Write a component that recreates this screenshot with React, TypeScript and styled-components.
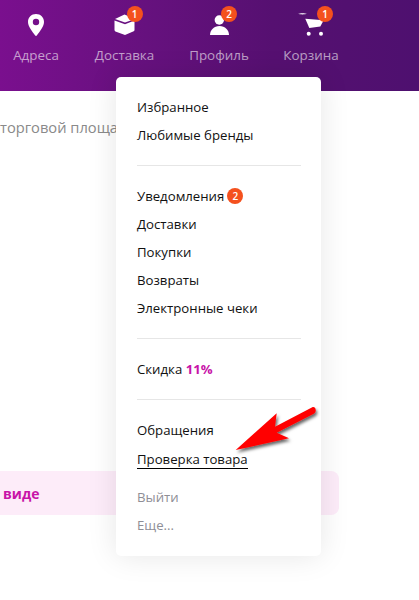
import React from "react";
import styled, { createGlobalStyle } from "styled-components";

const Global = createGlobalStyle`
  html, body { margin: 0; padding: 0; background: #fff; }
  body { font-family: "Open Sans", "Noto Sans", sans-serif; overflow: hidden; }
`;

const Page = styled.div`
  position: relative;
  width: 419px;
  height: 600px;
  overflow: hidden;
  background: #fff;
`;

const Header = styled.header`
  height: 91px;
  background: linear-gradient(90deg, #7a0f8e 0%, #66117e 35%, #561071 65%, #4e106f 100%);
  display: flex;
`;

const NavItem = styled.div<{ $w: number }>`
  width: ${(p) => p.$w}px;
  display: flex;
  flex-direction: column;
  align-items: center;
  padding-top: 11px;
  color: rgba(255, 255, 255, 0.6);
  font-size: 13.4px;
  line-height: 20px;
`;

const IconWrap = styled.div`
  position: relative;
  width: 30px;
  height: 26px;
  margin-bottom: 8px;
`;

const Badge = styled.span`
  display: inline-flex;
  align-items: center;
  justify-content: center;
  width: 16px;
  height: 16px;
  border-radius: 50%;
  background: #f4511e;
  color: #fff;
  font-size: 10px;
  font-weight: 600;
  line-height: 16px;
`;

const NavBadge = styled(Badge)<{ $left?: number }>`
  position: absolute;
  top: -5px;
  left: ${(p) => p.$left ?? 17}px;
`;

const Lead = styled.p`
  position: absolute;
  left: 0;
  top: 117px;
  margin: 0;
  white-space: nowrap;
  font-size: 14.7px;
  line-height: 20px;
  color: #8a8a8a;
`;

const Banner = styled.div`
  position: absolute;
  left: 0;
  top: 471px;
  width: 339px;
  height: 44px;
  box-sizing: border-box;
  padding-left: 3px;
  background: #fdecf9;
  border-radius: 0 8px 8px 0;
  display: flex;
  align-items: center;
  font-size: 14px;
  font-weight: 700;
  color: #c814a8;
`;

const Menu = styled.nav`
  position: absolute;
  left: 116px;
  top: 77px;
  width: 205px;
  height: 479px;
  box-sizing: border-box;
  padding: 16px 20px 0 21px;
  background: #fff;
  border-radius: 5px;
  box-shadow: 0 0 30px rgba(0, 0, 0, 0.1);
`;

const Group = styled.div<{ $gap?: number }>`
  display: flex;
  flex-direction: column;
  margin-top: ${(p) => p.$gap ?? 0}px;
`;

const Item = styled.div<{ $muted?: boolean }>`
  height: 28px;
  padding-bottom: 1px;
  box-sizing: border-box;
  display: flex;
  align-items: center;
  gap: 3px;
  font-size: 13.2px;
  color: ${(p) => (p.$muted ? "#8e8e96" : "#111")};
`;

const Underlined = styled.span`
  border-bottom: 1px solid #000;
  line-height: 18px;
  margin-top: 3px;
`;

const Divider = styled.hr`
  border: 0;
  height: 1px;
  background: #e6e6e6;
  margin: 16px 0;
`;

const Accent = styled.b`
  color: #c814a8;
`;

const Arrow = styled.svg`
  position: absolute;
  left: 226px;
  top: 400px;
  width: 100px;
  height: 60px;
  overflow: visible;
`;

const Pin = () => (
  <svg width="30" height="26" viewBox="0 0 30 26">
    <path fillRule="evenodd" fill="#fff" d="M15 3c-4.600 0-8 3.400-8 8 0 4.500 4.500 9.800 7.200 13.600.4.600 1.200.6 1.600 0C18.500 20.800 23 15.500 23 11c0-4.600-3.400-8-8-8zm0 4.800a3.200 3.200 0 1 1 0 6.400 3.200 3.200 0 0 1 0-6.400z" />
  </svg>
);

const Box = () => (
  <svg width="30" height="26" viewBox="0 0 30 26">
    <path fill="#fff" d="M5 8 14.500 3.500 25 8 15 11.500z" />
    <path fill="#fff" d="M4.500 9.500 15 13.200 24.500 9.500V19c0 .6-.3 1-.8 1.200L15 24 5.400 20.400c-.6-.2-.9-.7-.9-1.300z" />
  </svg>
);

const Person = () => (
  <svg width="30" height="26" viewBox="0 0 30 26">
    <circle cx="15.300" cy="9" r="4.700" fill="#fff" />
    <path fill="#fff" d="M6 24c0-5 4-9 9.500-9s9.500 4 9.500 9z" />
  </svg>
);

const Cart = () => (
  <svg width="30" height="26" viewBox="0 0 30 26">
    <path fill="#fff" d="M2 2.800C4 1.900 9 1.900 11 2.800 9 3.600 4 3.600 2 2.800z" />
    <path fill="#fff" d="M9.300 7.700 27.700 9.300 24.300 15.500 13.300 17z" />
    <circle cx="12.700" cy="22.700" r="2" fill="#fff" />
    <circle cx="25" cy="22.700" r="2" fill="#fff" />
  </svg>
);

export default function App() {
  return (
    <Page>
      <Global />
      <Header>
        <NavItem $w={72}>
          <IconWrap><Pin /></IconWrap>
          Адреса
        </NavItem>
        <NavItem $w={105}>
          <IconWrap><Box /><NavBadge>1</NavBadge></IconWrap>
          Доставка
        </NavItem>
        <NavItem $w={84}>
          <IconWrap><Person /><NavBadge>2</NavBadge></IconWrap>
          Профиль
        </NavItem>
        <NavItem $w={100}>
          <IconWrap><Cart /><NavBadge $left={21}>1</NavBadge></IconWrap>
          Корзина
        </NavItem>
      </Header>
      <Lead>торговой площа</Lead>
      <Banner>виде</Banner>
      <Menu>
        <Group>
          <Item>Избранное</Item>
          <Item>Любимые бренды</Item>
        </Group>
        <Divider />
        <Group>
          <Item>Уведомления <Badge>2</Badge></Item>
          <Item>Доставки</Item>
          <Item>Покупки</Item>
          <Item>Возвраты</Item>
          <Item>Электронные чеки</Item>
        </Group>
        <Divider />
        <Group>
          <Item><span>Скидка <Accent>11%</Accent></span></Item>
        </Group>
        <Divider />
        <Group>
          <Item>Обращения</Item>
          <Item><Underlined>Проверка товара</Underlined></Item>
        </Group>
        <Group $gap={11}>
          <Item $muted>Выйти</Item>
          <Item $muted>Еще...</Item>
        </Group>
      </Menu>
      <Arrow viewBox="0 0 100 60">
        <defs>
          <filter id="s" x="-20%" y="-20%" width="150%" height="160%">
            <feDropShadow dx="1.500" dy="2.500" stdDeviation="1.500" floodColor="#000" floodOpacity="0.6" />
          </filter>
        </defs>
        <path filter="url(#s)" fill="#f00" d="M86.300 7.300C88 6.500 90 8 89.700 10.700 89.500 12.500 88.500 13.400 87.300 14L50.700 32.700 63 38.300 9.700 50 50.700 13.300 49 26.700z" />
      </Arrow>
    </Page>
  );
}
